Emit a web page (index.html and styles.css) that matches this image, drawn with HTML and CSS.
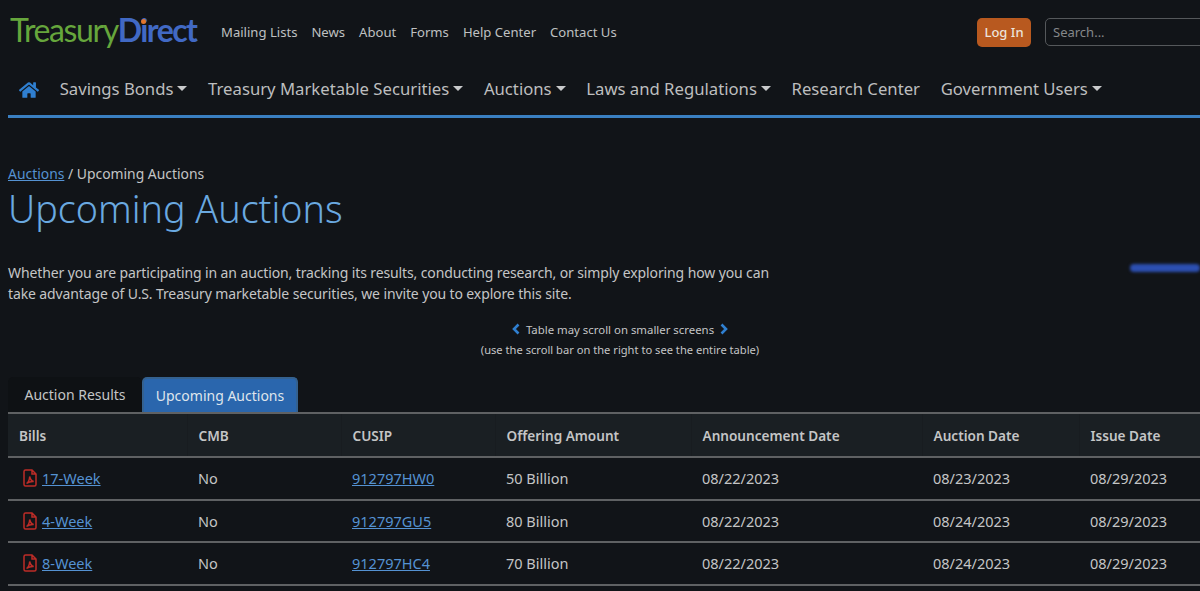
FILE: index.html
```html
<!DOCTYPE html>
<html>
<head>
<meta charset="utf-8">
<title>Upcoming Auctions</title>
<link rel="stylesheet" href="styles.css">
</head>
<body>

<div class="page">
    <header class="topbar">
        <a class="logo"><span class="logo-green">Treasury</span><span class="logo-blue">D<span class="logo-i">i<span class="logo-dot"></span></span>rect</span></a>
        <nav class="toplinks">
            <a>Mailing Lists</a>
            <a>News</a>
            <a>About</a>
            <a>Forms</a>
            <a>Help Center</a>
            <a>Contact Us</a>
        </nav>
        <a class="login">Log In</a>
        <input class="search" type="text" placeholder="Search...">
    </header>

    <nav class="mainnav">
        <svg class="home" viewBox="0 0 576 512"><path fill="#2f7fd0" d="M280.4 148.3 96 300.1V464a16 16 0 0 0 16 16l112-.3a16 16 0 0 0 15.900-16V368a16 16 0 0 1 16-16h64a16 16 0 0 1 16 16v95.600a16 16 0 0 0 16 16.100l112 .3a16 16 0 0 0 16-16V300L295.700 148.300a12.200 12.200 0 0 0-15.300 0zM571.600 251.500 488 182.600V44.100a12 12 0 0 0-12-12h-56a12 12 0 0 0-12 12v72.600L318.500 43a48 48 0 0 0-61 0L4.300 251.500a12 12 0 0 0-1.600 16.900l25.500 31A12 12 0 0 0 45.200 301l235.200-193.700a12.200 12.200 0 0 1 15.300 0L530.900 301a12 12 0 0 0 16.900-1.600l25.500-31a12 12 0 0 0-1.700-16.900z"/></svg>
        <a class="caret">Savings Bonds</a>
        <a class="caret">Treasury Marketable Securities</a>
        <a class="caret">Auctions</a>
        <a class="caret">Laws and Regulations</a>
        <a>Research Center</a>
        <a class="caret">Government Users</a>
    </nav>

    <div class="crumbs"><a class="link">Auctions</a> / Upcoming Auctions</div>
    <h1>Upcoming Auctions</h1>

    <div class="intro-row">
        <p class="intro">Whether you are participating in an auction, tracking its results, conducting research, or simply exploring how you can take advantage of U.S. Treasury marketable securities, we invite you to explore this site.</p>
        <div class="smudge"></div>
    </div>

    <div class="scroll-note">
        <div class="note-main">
            <svg class="chev" viewBox="0 0 8 12"><path d="M6.500 1.500 2 6l4.500 4.500" /></svg>
            <span>Table may scroll on smaller screens</span>
            <svg class="chev" viewBox="0 0 8 12"><path d="M1.500 1.500 6 6l-4.500 4.500" /></svg>
        </div>
        <div class="note-sub">(use the scroll bar on the right to see the entire table)</div>
    </div>

    <div class="tabs">
        <a class="tab">Auction Results</a>
        <a class="tab active">Upcoming Auctions</a>
    </div>

    <table class="auctions">
        <colgroup>
            <col class="c1"><col class="c2"><col class="c3"><col class="c4"><col class="c5"><col class="c6"><col class="c7">
        </colgroup>
        <thead>
            <tr><th>Bills</th><th>CMB</th><th>CUSIP</th><th>Offering Amount</th><th>Announcement Date</th><th>Auction Date</th><th>Issue Date</th></tr>
        </thead>
        <tbody>
            <tr>
                <td><svg class="pdf" viewBox="0 0 14 18"><path d="M1 2.500A1.500 1.500 0 0 1 2.500 1H9l4 4v10.500a1.500 1.500 0 0 1-1.500 1.500h-9A1.500 1.500 0 0 1 1 15.500zM9 1v4h4M3.500 14.500c1.500-1 3-4 3.200-7 .6 3 2 4.500 4 5-2.500-.2-5 .5-7.200 2z"/></svg><a class="link">17-Week</a></td>
                <td>No</td><td><a class="link">912797HW0</a></td><td>50 Billion</td><td>08/22/2023</td><td>08/23/2023</td><td>08/29/2023</td>
            </tr>
            <tr>
                <td><svg class="pdf" viewBox="0 0 14 18"><path d="M1 2.500A1.500 1.500 0 0 1 2.500 1H9l4 4v10.500a1.500 1.500 0 0 1-1.500 1.500h-9A1.500 1.500 0 0 1 1 15.500zM9 1v4h4M3.500 14.500c1.500-1 3-4 3.200-7 .6 3 2 4.500 4 5-2.500-.2-5 .5-7.200 2z"/></svg><a class="link">4-Week</a></td>
                <td>No</td><td><a class="link">912797GU5</a></td><td>80 Billion</td><td>08/22/2023</td><td>08/24/2023</td><td>08/29/2023</td>
            </tr>
            <tr>
                <td><svg class="pdf" viewBox="0 0 14 18"><path d="M1 2.500A1.500 1.500 0 0 1 2.500 1H9l4 4v10.500a1.500 1.500 0 0 1-1.500 1.500h-9A1.500 1.500 0 0 1 1 15.500zM9 1v4h4M3.500 14.500c1.500-1 3-4 3.200-7 .6 3 2 4.500 4 5-2.500-.2-5 .5-7.200 2z"/></svg><a class="link">8-Week</a></td>
                <td>No</td><td><a class="link">912797HC4</a></td><td>70 Billion</td><td>08/22/2023</td><td>08/24/2023</td><td>08/29/2023</td>
            </tr>
        </tbody>
    </table>
</div>

</body>
</html>
```

FILE: styles.css
```css
html, body {
    height: 591px;
    overflow: hidden;
}

body {
    background-color: #111418;
    color: #c4c5c6;
    font-family: "Noto Sans", sans-serif;
    font-size: 15px;
    margin: 0;
}

.page {
    width: 1300px;
    padding-left: 8px;
}

.topbar {
    display: flex;
    align-items: center;
    height: 64px;
}

.logo {
    display: flex;
    width: 213px;
    padding-left: 2px;
    font-family: Lato, sans-serif;
    font-size: 32px;
    line-height: 40px;
    margin-top: -5px;
    box-sizing: border-box;
}

.logo-green {
    color: #66a63c;
    font-weight: 400;
    letter-spacing: -1.400px;
}

.logo-blue {
    color: #4169c4;
    font-weight: 700;
    letter-spacing: -1.600px;
}

.logo-i {
    position: relative;
}

.logo-dot {
    position: absolute;
    left: 1px;
    top: 9px;
    width: 5px;
    height: 5px;
    border-radius: 50%;
    background: #e2762c;
}

.toplinks {
    display: flex;
    gap: 14px;
    font-size: 13.100px;
    color: #bfc0c1;
    width: 756px;
}

.login {
    background: #b8591f;
    color: #ece4dc;
    font-size: 13px;
    font-weight: 500;
    border-radius: 5px;
    width: 54px;
    height: 29px;
    line-height: 29px;
    text-align: center;
}

.search {
    margin-left: 14px;
    width: 240px;
    height: 28px;
    box-sizing: border-box;
    background: transparent;
    border: 1px solid #55585b;
    border-radius: 5px;
    padding: 0 7px;
    font-family: "Noto Sans", sans-serif;
    font-size: 13px;
    color: #c9cacb;
}

.search::placeholder {
    color: #85888a;
}

.mainnav {
    display: flex;
    align-items: center;
    width: 1192px;
    height: 51px;
    border-bottom: 3px solid #3a7fc1;
    font-size: 16.700px;
    gap: 20.700px;
    color: #bdbebf;
}

.mainnav a {
    margin-bottom: 2px;
}

.home {
    width: 20px;
    height: 18px;
    margin: 0 0 0 11px;
}

.caret::after {
    content: "";
    display: inline-block;
    margin-left: 4px;
    vertical-align: 4px;
    border-top: 5px solid #c9cacb;
    border-left: 5px solid transparent;
    border-right: 5px solid transparent;
}

.crumbs {
    margin-top: 46px;
    font-size: 13.900px;
    line-height: 20px;
}

.link {
    color: #5592d2;
    text-decoration: underline;
}

h1 {
    color: #6aa9e0;
    font-size: 37.700px;
    font-weight: 300;
    line-height: 50px;
    margin: 0;
}

.intro-row {
    display: flex;
    align-items: center;
    width: 1192px;
    margin-top: 28px;
}

.intro {
    width: 780px;
    margin: 0;
    font-size: 14px;
    letter-spacing: -0.120px;
    line-height: 21px;
}

.smudge {
    width: 70px;
    height: 8px;
    margin-left: auto;
    margin-bottom: 30px;
    border-radius: 4px;
    background: #2c4fb0;
    filter: blur(1.500px);
}

.scroll-note {
    width: 1224px;
    margin-top: 15px;
    text-align: center;
    font-size: 11.150px;
}

.note-main {
    display: flex;
    justify-content: center;
    align-items: center;
    gap: 6px;
    height: 20px;
    font-size: 11.400px;
}

.note-sub {
    padding-top: 1px;
    height: 20px;
    line-height: 20px;
}

.chev {
    width: 8px;
    height: 12px;
    fill: none;
    stroke: #2f7fd0;
    stroke-width: 2.600;
}

.tabs {
    display: flex;
    margin-top: 17px;
    height: 35px;
}

.tab {
    width: 134px;
    box-sizing: border-box;
    line-height: 36px;
    text-align: center;
    font-size: 14px;
    background: #0e1114;
    border-radius: 5px 5px 0 0;
}

.tab.active {
    width: 156px;
    background: #2a66ad;
    border: 2px solid #34618f;
    border-bottom: none;
    color: #dfe5ec;
    line-height: 33px;
}

.auctions {
    border-collapse: collapse;
    table-layout: fixed;
    width: 1292px;
    font-size: 14.500px;
}

.c1 { width: 179px; }
.c2 { width: 154px; }
.c3 { width: 154px; }
.c4 { width: 196px; }
.c5 { width: 231px; }
.c6 { width: 157px; }
.c7 { width: 221px; }

th, td {
    text-align: left;
    padding: 0 0 0 11px;
    height: 40.500px;
    border-bottom: 2px solid #5f6163;
}

th {
    height: 42px;
    font-size: 13.600px;
    background: #1a1f23;
    font-weight: 600;
    color: #c4c5c6;
    border-top: 2px solid #5f6163;
    border-left: 1px solid #181c20;
}

th:first-child {
    border-left: none;
}

.pdf {
    width: 14px;
    height: 18px;
    margin: 0 5px -3px 4px;
    fill: none;
    stroke: #bd2c27;
    stroke-width: 1.500;
}
```
